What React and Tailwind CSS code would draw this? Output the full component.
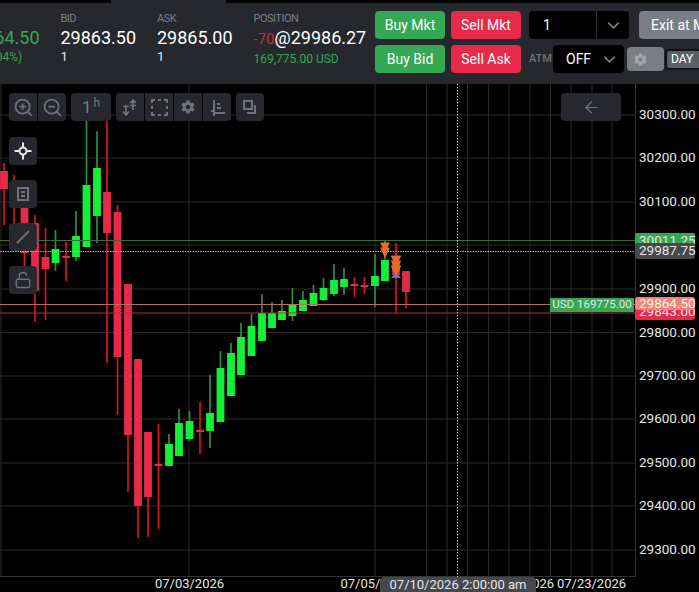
import { ZoomIn, ZoomOut, ArrowLeft, ChevronDown, LockOpen } from 'lucide-react';
import { IoMdSettings } from 'react-icons/io';

const GREEN = 'g';
const RED = 'r';

// x, wick top, body top, body bottom, wick bottom
const candles = [
  [RED, 4, 163, 171, 189, 225],
  [RED, 14, 175, 184, 205, 226],
  [RED, 24.5, 200, 207, 253, 280],
  [RED, 35, 215, 223, 291, 322],
  [RED, 45.5, 228, 257, 269, 320],
  [GREEN, 55.5, 230, 249, 263, 271],
  [RED, 66, 242, 256, 258, 281],
  [GREEN, 76, 211, 236, 257, 261],
  [GREEN, 86.5, 120, 185, 247, 247],
  [GREEN, 97, 131, 168, 216, 243],
  [RED, 107, 120, 192, 233, 363],
  [RED, 117.5, 205, 212, 357, 415],
  [RED, 128, 284, 284, 435, 492],
  [RED, 138, 359, 359, 506, 538],
  [RED, 148, 432, 432, 497, 537],
  [RED, 158.5, 424, 464, 466, 529],
  [GREEN, 169, 434, 444, 466, 466],
  [GREEN, 179, 409, 423, 456, 456],
  [GREEN, 189.5, 411, 421, 439, 441],
  [RED, 200, 402, 430, 431, 454],
  [GREEN, 210, 375, 413, 431, 448],
  [GREEN, 220.5, 351, 368, 422, 422],
  [GREEN, 231, 343, 353, 396, 396],
  [GREEN, 241, 323, 337, 375, 375],
  [GREEN, 251.5, 314, 326, 356, 356],
  [GREEN, 262, 294, 313, 341, 341],
  [GREEN, 272, 302, 313, 328, 328],
  [GREEN, 282, 300, 311, 320, 320],
  [GREEN, 292.5, 288, 305, 316, 321],
  [GREEN, 303, 291, 300, 311, 311],
  [GREEN, 313.5, 285, 293, 306, 306],
  [GREEN, 323.5, 278, 288, 300, 301],
  [GREEN, 334, 264, 280, 294, 296],
  [GREEN, 344, 268, 279, 287, 295],
  [RED, 354.5, 277, 284, 286, 297],
  [RED, 364.5, 277, 285, 286, 294],
  [GREEN, 375, 254, 276, 286, 307],
  [GREEN, 385, 240, 260, 281, 281],
  [RED, 396, 243, 264, 275, 313],
  [RED, 406, 271, 271, 292, 308],
];

const gridX = [1, 189, 375, 426.5, 447, 467.5, 488.5, 509, 530, 550.5, 571, 592, 612];
const prices = [
  ['30300.00', 115], ['30200.00', 158], ['30100.00', 202], ['29900.00', 289],
  ['29800.00', 332.5], ['29700.00', 376], ['29600.00', 419], ['29500.00', 463],
  ['29400.00', 506], ['29300.00', 550],
];

const orders = [[385, 243, 4], [385, 248, 4], [396, 256, 4.5], [396, 261, 4.5], [396, 266, 4.5]];

function Candle({ c }) {
  const [kind, x, wt, bt, bb, wb] = c;
  const up = kind === GREEN;
  return (
    <g>
      <line x1={x} x2={x} y1={wt} y2={wb} stroke={up ? '#2f8d45' : '#dc1226'} strokeWidth="1.7" />
      <rect
        x={x - 3.9}
        y={bt}
        width="7.8"
        height={Math.max(bb - bt, 2)}
        fill={up ? '#14f03a' : '#e82a4a'}
      />
    </g>
  );
}

function Stat({ label, value, sub, className = '' }) {
  return (
    <div className={`w-[96.5px] shrink-0 ${className}`}>
      <div className="text-[11px] leading-[14px] tracking-[-0.5px] text-[#7b7e86] uppercase">{label}</div>
      <div className="text-[18px] leading-[23px] whitespace-nowrap text-white">{value}</div>
      <div className="text-[12px] leading-[16px] whitespace-nowrap text-[#e4e4e6]">{sub}</div>
    </div>
  );
}

function ActionButton({ children, className }) {
  return (
    <button className={`flex h-[28px] w-[70px] items-center justify-center rounded-[4px] text-[14px] text-white ${className}`}>
      {children}
    </button>
  );
}

function ToolButton({ children, className = 'w-[28px]' }) {
  return (
    <div className={`flex h-[28px] items-center justify-center rounded-[4px] bg-[#26282d] text-[#6f7278] ${className}`}>
      {children}
    </div>
  );
}

export default function App() {
  return (
    <div className="flex h-[592px] w-[699px] flex-col overflow-hidden bg-black font-['Roboto',sans-serif]">
      <div className="h-[3px] shrink-0 bg-black">
        <div className="ml-[111px] h-full w-[115px] bg-[#26282d]" />
      </div>

      {/* quote + order entry */}
      <div className="flex h-[81px] shrink-0 items-start overflow-hidden bg-[#26282d]">
        <div className="ml-[-36px] flex w-[411px] shrink-0 pt-[9px]">
          <Stat label="Last" value={<span className="text-[#34a853]">29864.50</span>} sub={<span className="ml-[11px] text-[#34a853]">(+0.04%)</span>} />
          <Stat label="Bid" value="29863.50" sub={<span className="text-[13px]">1</span>} />
          <Stat label="Ask" value="29865.00" sub={<span className="text-[13px]">1</span>} />
          <Stat
            label="Position"
            value={<><span className="text-[15px] text-[#d8213f]">-70</span>@29986.27</>}
            sub={<span className="text-[#34a853]">169,775.00 USD</span>}
          />
        </div>

        <div className="flex shrink-0 flex-col gap-[6px] pt-[8px]">
          <div className="flex items-center">
            <ActionButton className="bg-[#34a853]">Buy Mkt</ActionButton>
            <ActionButton className="ml-[6px] bg-[#e82a4a]">Sell Mkt</ActionButton>
            <div className="ml-[8px] flex h-[28px] w-[100px] items-center rounded-[4px] bg-black text-[14px] text-white">
              <span className="w-[68px] border-r border-[#2e2f33] pl-[14px] leading-[28px]">1</span>
              <ChevronDown className="ml-[7px] text-[#7b7e86]" size={19} />
            </div>
            <button className="ml-[10px] flex h-[28px] w-[90px] shrink-0 items-center justify-center whitespace-nowrap rounded-[4px] bg-[#7b7e86] text-[14px] text-white">
              Exit at Mkt
            </button>
          </div>
          <div className="flex items-center">
            <ActionButton className="bg-[#34a853]">Buy Bid</ActionButton>
            <ActionButton className="ml-[6px] bg-[#e82a4a]">Sell Ask</ActionButton>
            <span className="ml-[8px] w-[24px] text-[11px] font-medium text-[#6f7278]">ATM</span>
            <div className="flex h-[28px] w-[71px] items-center rounded-[4px] bg-black text-[14px] text-white">
              <span className="pl-[13px]">OFF</span>
              <ChevronDown className="ml-[9px] text-[#7b7e86]" size={19} />
            </div>
            <div className="ml-[3px] flex h-[24px] w-[37px] items-center pl-[6px] rounded-[4px] bg-[#7b7e86] text-[#a4a6ab]">
              <IoMdSettings size={15} />
            </div>
            <div className="ml-[1px] flex h-[21px] w-[40px] shrink-0 items-center rounded-[4px] border-2 border-[#101114] bg-[#5c5f66] pl-[4px] text-[12px] text-white">
              DAY
            </div>
          </div>
        </div>
      </div>

      {/* chart */}
      <div className="relative flex-1">
        <svg className="block h-full w-full" viewBox="0 84 699 508">
          {gridX.map((x) => (
            <line key={x} x1={x} x2={x} y1="84" y2="577" stroke="#2a2a2a" strokeWidth="1" />
          ))}
          {[115, 158, 202, 245, 289, 332.5, 376, 419, 463, 506, 550].map((y) => (
            <line key={y} x1="0" x2="635" y1={y} y2={y} stroke="#2a2a2a" strokeWidth="1" />
          ))}
          <line x1="635.5" x2="635.5" y1="84" y2="577" stroke="#333" strokeWidth="1" />
          <line x1="0" x2="635" y1="576.5" y2="576.5" stroke="#333" strokeWidth="1" />

          {candles.map((c, i) => <Candle key={i} c={c} />)}

          <line x1="0" x2="635" y1="240.5" y2="240.5" stroke="#34703b" strokeWidth="1" />
          <line x1="0" x2="635" y1="304.5" y2="304.5" stroke="#b5705f" strokeWidth="1" />
          <line x1="0" x2="635" y1="313" y2="313" stroke="#b32a3e" strokeWidth="1" />
          <line x1="0" x2="635" y1="251.5" y2="251.5" stroke="#8fb8dc" strokeWidth="1" strokeDasharray="1.5 1" />
          <line x1="457.5" x2="457.5" y1="84" y2="577" stroke="#c8c8c8" strokeWidth="1" strokeDasharray="1.5 1.5" />

          <path d="M396 272 L401 278 L391 278 Z" fill="#3f87c9" />
          {orders.map(([x, y, r], i) => (
            <path
              key={i}
              d={`M${x - r} ${y} L${x + r} ${y} L${x} ${y + 9} Z`}
              fill="#e8692a"
              stroke="#e8692a"
              strokeWidth="1.2"
              strokeLinejoin="round"
            />
          ))}

          <g fill="#e6e6e6" fontSize="13.5" fontFamily="Roboto, sans-serif">
            {prices.map(([p, y]) => (
              <text key={p} x="639" y={y + 4}>{p}</text>
            ))}
          </g>
          <g fill="#e6e6e6" fontSize="13" fontFamily="Roboto, sans-serif">
            <text x="189.5" y="588" textAnchor="middle">07/03/2026</text>
            <text x="375" y="588" textAnchor="middle">07/05/2026</text>
            <text x="519.5" y="588" textAnchor="middle">07/16/2026</text>
            <text x="591.5" y="588" textAnchor="middle">07/23/2026</text>
          </g>
        </svg>

        {/* top toolbar */}
        <div className="absolute top-[9px] left-[9px] flex">
          <ToolButton className="w-[28px] rounded-r-none"><ZoomIn size={21} /></ToolButton>
          <ToolButton className="ml-[1px] w-[28px] rounded-l-none"><ZoomOut size={21} /></ToolButton>
          <ToolButton className="ml-[5px] w-[40px] text-[#77797f]">
            <span className="text-[17px] leading-none">1<sup className="ml-[2px] text-[12px]">h</sup></span>
          </ToolButton>
          <ToolButton className="ml-[5px] w-[28px] rounded-r-none">
            <svg width="18" height="18" viewBox="0 0 18 18" fill="none" stroke="currentColor" strokeWidth="1.7">
              <path d="M5 7V17M2 13.5L5 17L8 13.5M2 8.5H8M12 2V12M9 5L12 2L15 5M9 7.5H15" />
            </svg>
          </ToolButton>
          <ToolButton className="ml-[1px] w-[28px] rounded-none">
            <svg width="17" height="17" viewBox="0 0 17 17" fill="none" stroke="currentColor" strokeWidth="2">
              <path d="M1 4V1H4M7 1H10M13 1H16V4M16 7V10M16 13V16H13M10 16H7M4 16H1V13M1 10V7" />
            </svg>
          </ToolButton>
          <ToolButton className="ml-[1px] w-[28px] rounded-none"><IoMdSettings size={16} /></ToolButton>
          <ToolButton className="ml-[1px] w-[28px] rounded-l-none">
            <svg width="17" height="17" viewBox="0 0 17 17" fill="none" stroke="currentColor" strokeWidth="2">
              <path d="M5 1V14H16M2 12H5M5 15V17M8 9H12M8 5H11" />
            </svg>
          </ToolButton>
          <ToolButton className="ml-[5px] w-[28px]">
            <svg width="16" height="16" viewBox="0 0 16 16" fill="none" stroke="currentColor" strokeWidth="2">
              <path d="M2 2H10V10H2ZM13 6V14H5" />
            </svg>
          </ToolButton>
        </div>
        <div className="absolute top-[9px] left-[561px]">
          <ToolButton className="w-[60px]"><ArrowLeft size={19} strokeWidth={1.5} /></ToolButton>
        </div>

        {/* left drawing tools */}
        <div className="absolute top-[53px] left-[9px] flex flex-col gap-[15px]">
          <ToolButton>
            <svg width="18" height="18" viewBox="0 0 18 18" fill="none" stroke="#e8e8e8" strokeWidth="2">
              <circle cx="9" cy="9" r="3.5" />
              <path d="M9 0.5V5M9 13V17.5M0.5 9H5M13 9H17.5" />
            </svg>
          </ToolButton>
          <ToolButton>
            <svg width="12" height="14" viewBox="0 0 12 14" fill="none" stroke="currentColor" strokeWidth="2">
              <path d="M1 1H11V13H1ZM4 5H8M4 9H8" />
            </svg>
          </ToolButton>
          <ToolButton className="w-[28px] border border-[#2f3136]">
            <svg width="14" height="14" viewBox="0 0 14 14" fill="none" stroke="currentColor" strokeWidth="2">
              <path d="M1 13L13 1" />
            </svg>
          </ToolButton>
          <ToolButton><LockOpen size={18} strokeWidth={1.75} /></ToolButton>
        </div>

        {/* price tags */}
        <div className="absolute top-[149px] left-[635px] h-[12px] w-[60px] overflow-hidden rounded-[2px] bg-[#34a853] pl-[4px] text-[13.5px] leading-[15px] text-[#e6e6e6]">30011.25</div>
        <div className="absolute top-[159px] left-[635px] flex h-[16px] w-[60px] items-center rounded-[3px] bg-[#47484d] pb-[1px] pl-[4px] text-[13.5px] text-[#e6e6e6]">29987.75</div>
        <div className="absolute top-[222px] left-[635px] flex h-[14px] w-[60px] items-end overflow-hidden rounded-[3px] bg-[#e82a4a] pb-[2px] pl-[4px] text-[13.5px] leading-[14px] text-[#e6e6e6]">29843.00</div>
        <div className="absolute top-[213px] left-[635px] flex h-[13px] w-[60px] items-center rounded-[3px] bg-[#f28579] pl-[4px] text-[13.5px] text-[#f2f2f2]">29864.50</div>
        <div className="absolute top-[214px] left-[550px] flex h-[14px] w-[84px] items-center justify-center bg-[#34a853] text-[11.5px] text-[#e6e6e6]">USD 169775.00</div>

        {/* crosshair date */}
        <div className="absolute bottom-0 left-[380px] flex h-[15px] w-[156px] items-center justify-center rounded-t-[4px] bg-[#47484d] text-[13px] text-[#e6e6e6]">
          07/10/2026 2:00:00 am
        </div>
      </div>
    </div>
  );
}
